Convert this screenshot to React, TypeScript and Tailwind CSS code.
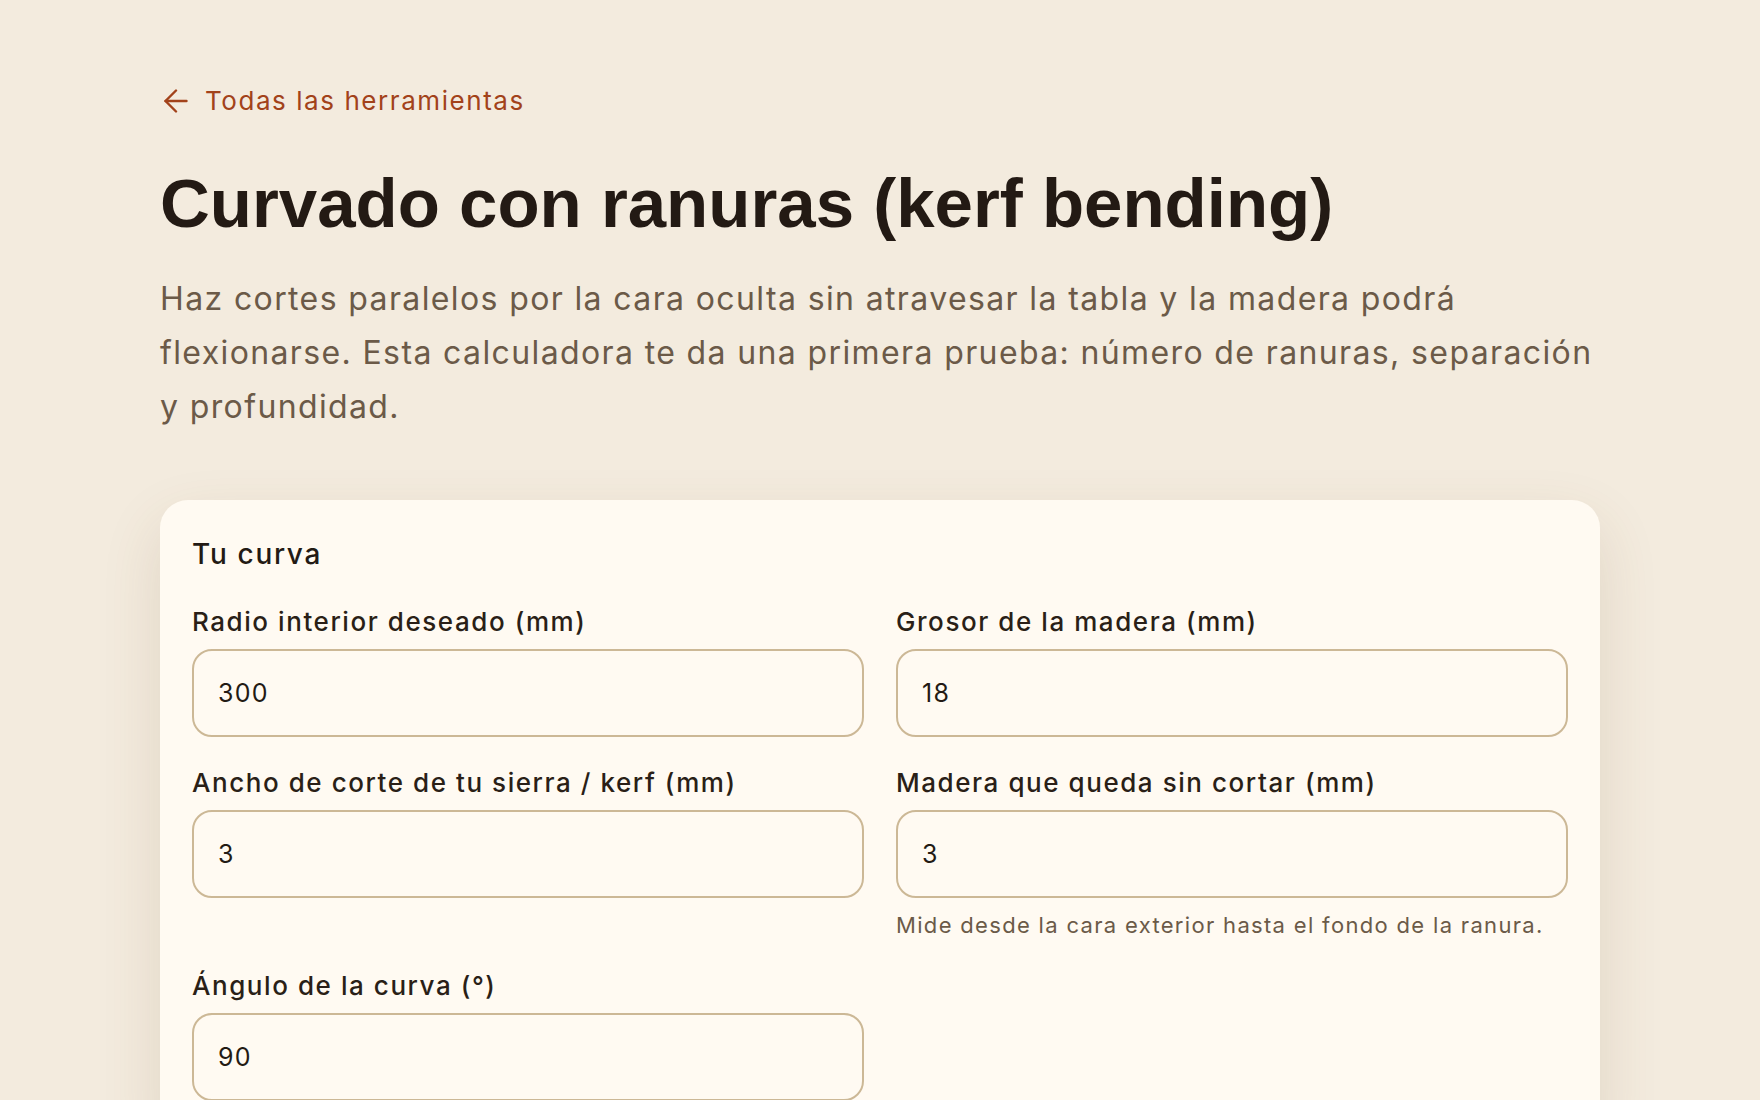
type Field = {
  label: string;
  value: string;
  hint?: string;
};

const fields: Field[] = [
  { label: "Radio interior deseado (mm)", value: "300" },
  { label: "Grosor de la madera (mm)", value: "18" },
  { label: "Ancho de corte de tu sierra / kerf (mm)", value: "3" },
  {
    label: "Madera que queda sin cortar (mm)",
    value: "3",
    hint: "Mide desde la cara exterior hasta el fondo de la ranura.",
  },
  { label: "Ángulo de la curva (°)", value: "90" },
];

const bodyFont = "font-['Inter','Noto_Sans',sans-serif]";

function BackArrow() {
  return (
    <svg
      width="24"
      height="24"
      viewBox="4 4 16 16"
      fill="none"
      stroke="currentColor"
      strokeWidth={1.6}
      strokeLinecap="round"
      strokeLinejoin="round"
      aria-hidden="true"
    >
      <path d="m12 19-7-7 7-7" />
      <path d="M19 12H5" />
    </svg>
  );
}

function NumberField({ label, value, hint }: Field) {
  return (
    <label className="flex flex-col">
      <span className="text-[26px] leading-9 font-medium tracking-[0.06em] text-[#2a1f17]">
        {label}
      </span>
      <input
        type="text"
        defaultValue={value}
        className="mt-[9px] h-[88px] w-full rounded-[20px] border-2 border-[#ccb896] bg-[#fffaf2] px-6 text-[25px] tracking-[0.05em] text-[#231a14] outline-none"
      />
      {hint ? (
        <span className="mt-3 text-[22px] leading-[30px] tracking-[0.06em] text-[#6b5a48]">
          {hint}
        </span>
      ) : null}
    </label>
  );
}

export default function App() {
  return (
    <div className={`min-h-screen bg-[#f3ebde] ${bodyFont}`}>
      <div className="mx-auto w-[1440px] pt-[83px]">
        <a
          href="#"
          className="inline-flex items-center gap-[17px] pl-1 text-[26px] leading-9 tracking-[0.06em] text-[#a2421a]"
        >
          <BackArrow />
          <span>Todas las herramientas</span>
        </a>

        <h1 className="mt-[47px] font-['Liberation_Sans',sans-serif] text-[69px] leading-[1.1] font-bold text-[#231a14]">
          Curvado con ranuras (kerf bending)
        </h1>

        <p className="mt-[30px] text-[32px] leading-[54px] tracking-[0.043em] text-[#6b5a48]">
          Haz cortes paralelos por la cara oculta sin atravesar la tabla y la
          madera podrá flexionarse. Esta calculadora te da una primera prueba:
          número de ranuras, separación y profundidad.
        </p>

        <section className="mt-[66px] rounded-[28px] bg-[#fffaf2] px-8 pt-9 pb-10 shadow-[0_24px_60px_rgba(110,80,40,0.14)]">
          <h2 className="text-[28px] leading-9 font-medium tracking-[0.06em] text-[#231a14]">
            Tu curva
          </h2>
          <div className="mt-8 grid grid-cols-2 items-start gap-x-8 gap-y-7">
            {fields.map((field) => (
              <NumberField key={field.label} {...field} />
            ))}
          </div>
        </section>
      </div>
    </div>
  );
}
